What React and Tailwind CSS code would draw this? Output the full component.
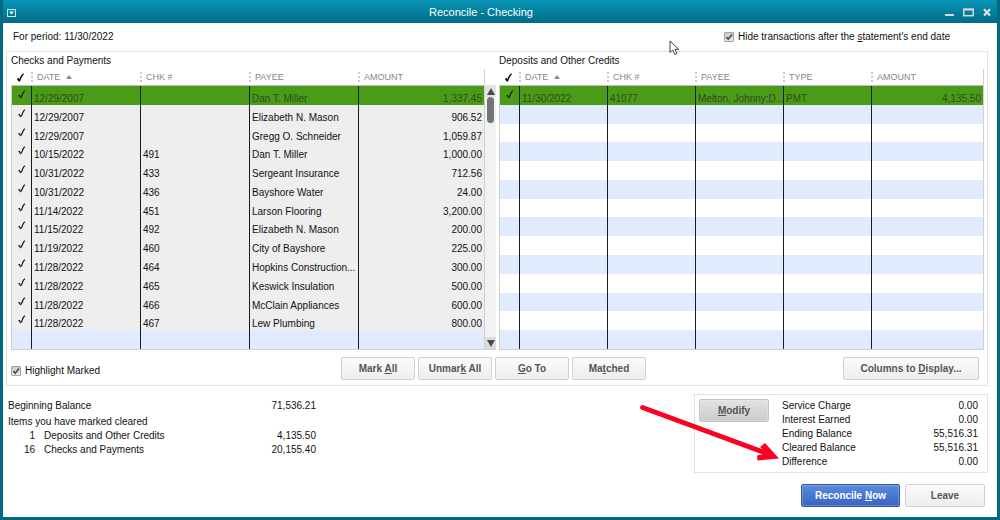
const CHECKS = [
  ["12/29/2007", "", "Dan T. Miller", "1,337.45"],
  ["12/29/2007", "", "Elizabeth N. Mason", "906.52"],
  ["12/29/2007", "", "Gregg O. Schneider", "1,059.87"],
  ["10/15/2022", "491", "Dan T. Miller", "1,000.00"],
  ["10/31/2022", "433", "Sergeant Insurance", "712.56"],
  ["10/31/2022", "436", "Bayshore Water", "24.00"],
  ["11/14/2022", "451", "Larson Flooring", "3,200.00"],
  ["11/15/2022", "492", "Elizabeth N. Mason", "200.00"],
  ["11/19/2022", "460", "City of Bayshore", "225.00"],
  ["11/28/2022", "464", "Hopkins Construction...", "300.00"],
  ["11/28/2022", "465", "Keswick Insulation", "500.00"],
  ["11/28/2022", "466", "McClain Appliances", "600.00"],
  ["11/28/2022", "467", "Lew Plumbing", "800.00"],
];

const DEPOSITS = [["11/30/2022", "41077", "Melton, Johnny:D...", "PMT", "4,135.50"]];

const ROWS = 14;

function HeadTick() {
  return (
    <svg viewBox="0 0 9 10" className="ml-[5px] h-[9px] w-[9px]" fill="#000000" stroke="#000000" strokeWidth="0.3" aria-hidden="true">
      <path d="M0.6 6.2 L2.2 5.8 L3.1 7.3 C4.2 4.4 5.4 2 7.8 0.6 L8.2 1.2 C6.6 3.2 5 5.6 3.9 9.3 L2.3 9.3 Z" />
    </svg>
  );
}

function RowTick() {
  return (
    <svg viewBox="0 0 8 9" className="mt-1 ml-[6px] h-[9px] w-2" fill="none" stroke="#1c1c1c" aria-hidden="true">
      <path d="M0.4 5.6 L1.6 5.6 L2.4 7.8" strokeWidth="1.2" />
      <path d="M2.4 8 C3.2 7.6 3.8 6.4 4.4 4.6 C5 2.8 5.6 1.6 6.9 0.8" strokeWidth="1.3" />
    </svg>
  );
}

function CheckBox({ children }) {
  return (
    <label className="flex items-center gap-1">
      <span className="grid size-[10px] place-items-center">
        <input
          type="checkbox"
          defaultChecked
          className="col-start-1 row-start-1 size-[10px] appearance-none rounded-[1px] border border-[#a3a3a3] bg-linear-to-b from-[#c9c9c9] to-[#ededed]"
        />
        <svg viewBox="0 0 10 10" className="pointer-events-none col-start-1 row-start-1 size-[10px]" fill="none" stroke="#4a4a4a" strokeWidth="1.6">
          <path d="M2.2 5 L4.2 7.2 L8 2.6" />
        </svg>
      </span>
      <span>{children}</span>
    </label>
  );
}

function Button({ className, children }) {
  return (
    <button
      type="button"
      className={`h-[23px] rounded-[2px] border bg-linear-to-b text-[10px] leading-none font-bold shadow-[inset_0_0_0_1px_rgba(255,255,255,0.2)] ${className}`}
    >
      {children}
    </button>
  );
}

const LIGHT = "border-[#cfcfcf] from-[#fcfcfc] to-[#ededed] text-[#555555]";

function Ledger({ heads, widths, rows, marked }) {
  const last = heads.length - 1;
  return (
    <table className="h-[281px] w-full table-fixed border-separate border-spacing-0 border-r border-b border-[#d0d0d0]">
      <colgroup>
        <col className="w-[20px]" />
        {heads.map((h, i) => (
          <col key={h} className={i === last ? "" : widths} />
        ))}
      </colgroup>
      <thead>
        <tr className="h-[17px] text-left text-[9px] leading-none text-[#858585]">
          <th className="border-b border-[#bdbdbd] bg-white p-0">
            <HeadTick />
          </th>
          {heads.map((h) => (
            <th key={h} className="border-b border-[#bdbdbd] bg-white p-0 font-normal">
              <span className="flex h-[10px] items-center border-l-2 border-dotted border-[#cccccc] pl-1">
                {h}
                {h === "DATE" && (
                  <svg viewBox="0 0 6 4" className="ml-[6px] h-1 w-[6px]" fill="#8a8a8a">
                    <path d="M0 4 L3 0 L6 4 Z" />
                  </svg>
                )}
              </span>
            </th>
          ))}
        </tr>
      </thead>
      <tbody>
        {Array.from({ length: ROWS }, (_, r) => {
          const row = rows[r];
          const tone =
            r === 0
              ? "bg-[#4a9c18] text-[#34491f]"
              : row && marked
                ? "bg-[#eeeeee] text-[#111111]"
                : r % 2
                  ? "bg-[#e0ecfe]"
                  : "bg-white";
          return (
            <tr key={r} className={`h-[18px] ${tone}`}>
              <td className="border-l border-[#d0d0d0] p-0 align-top">{row && <RowTick />}</td>
              {heads.map((h, i) => (
                <td
                  key={h}
                  className={`overflow-hidden border-l border-[#1c1c1c] px-[2px] pt-[7px] pb-0 align-top leading-[11px] whitespace-nowrap ${i === last ? "text-right" : ""}`}
                >
                  {row ? row[i] : ""}
                </td>
              ))}
            </tr>
          );
        })}
      </tbody>
    </table>
  );
}

function ScrollBar() {
  return (
    <div className="mt-[16px] flex w-[11px] shrink-0 flex-col border-b border-[#d0d0d0] bg-[#f2f2f2]">
      <button type="button" aria-label="Scroll up" className="grid h-[12px] place-items-center bg-[#e3e3e3]">
        <svg viewBox="0 0 8 7" className="h-[7px] w-2" fill="#4a4a4a">
          <path d="M0 7 L4 0 L8 7 Z" />
        </svg>
      </button>
      <div className="flex-1 px-[2px]">
        <div className="h-[26px] rounded-[4px] bg-[#6f7676]" />
      </div>
      <button type="button" aria-label="Scroll down" className="grid h-[12px] place-items-center bg-[#dcdcdc]">
        <svg viewBox="0 0 8 7" className="h-[7px] w-2" fill="#4a4a4a">
          <path d="M0 0 L4 7 L8 0 Z" />
        </svg>
      </button>
    </div>
  );
}

function TitleBar() {
  return (
    <header className="flex h-[23px] items-center bg-linear-to-b from-[#0795b7] to-[#026c85] pt-[2px] pr-[6px] pl-1">
      <div className="flex flex-1">
        <button type="button" aria-label="Window menu">
          <svg viewBox="0 0 9 8" className="block h-2 w-[9px]" fill="none" stroke="#d3e3e7">
            <rect x="0.5" y="0.5" width="8" height="7" />
            <path d="M2 2.6 H7 L4.5 5.6 Z" fill="#ffffff" stroke="none" />
          </svg>
        </button>
      </div>
      <h1 className="pr-[36px] text-[11px] leading-none text-white">Reconcile - Checking</h1>
      <div className="flex flex-1 items-center justify-end gap-[9px]">
        <button type="button" aria-label="Minimize">
          <svg viewBox="0 0 9 9" className="block size-[9px]">
            <path d="M0 7 H9" stroke="#d6d6d6" strokeWidth="2" />
          </svg>
        </button>
        <button type="button" aria-label="Maximize">
          <svg viewBox="0 0 11 9" className="block h-[9px] w-[11px]" fill="none" stroke="#d6d6d6">
            <rect x="0.8" y="1.3" width="9.4" height="6.4" strokeWidth="1.5" />
            <path d="M0.1 1.5 H10.9" strokeWidth="2" />
          </svg>
        </button>
        <button type="button" aria-label="Close">
          <svg viewBox="0 0 8 9" className="block h-[9px] w-2" stroke="#e2e2e2" strokeWidth="2.2">
            <path d="M1 1.2 L7 7.6 M7 1.2 L1 7.6" />
          </svg>
        </button>
      </div>
    </header>
  );
}

const TOTALS = [
  ["Service Charge", "0.00"],
  ["Interest Earned", "0.00"],
  ["Ending Balance", "55,516.31"],
  ["Cleared Balance", "55,516.31"],
  ["Difference", "0.00"],
];

export default function App() {
  return (
    <div className="relative flex min-h-screen flex-col border-x-[3px] border-b-[3px] border-[#026a80] bg-white font-['Liberation_Sans',Arial,sans-serif] text-[10px] leading-[12px] text-[#111111]">
      <TitleBar />
      <main className="flex flex-1 flex-col pr-[9px] pl-[3px]">
        <div className="flex h-[28px] items-center justify-between pr-[38px] pl-[7px]">
          <p>For period: 11/30/2022</p>
          <CheckBox>
            Hide transactions after the <u>s</u>tatement's end date
          </CheckBox>
        </div>

        <div className="border border-[#e3e3e3] pt-[3px] pr-[3px] pb-[5px] pl-[4px]">
          <div className="flex gap-[3px]">
            <section className="flex-1">
              <h2>Checks and Payments</h2>
              <div className="mt-[2px] flex">
                <Ledger heads={["DATE", "CHK #", "PAYEE", "AMOUNT"]} widths="w-[109px]" rows={CHECKS} marked />
                <ScrollBar />
              </div>
            </section>
            <section className="flex-1">
              <h2>Deposits and Other Credits</h2>
              <div className="mt-[2px]">
                <Ledger heads={["DATE", "CHK #", "PAYEE", "TYPE", "AMOUNT"]} widths="w-[88px]" rows={DEPOSITS} />
              </div>
            </section>
          </div>
          <div className="mt-[7px] flex items-center pr-[5px]">
            <div className="flex-1 pt-1">
              <CheckBox>Highlight Marked</CheckBox>
            </div>
            <div className="flex gap-[3px] pr-[3px]">
              <Button className={`w-[74px] ${LIGHT}`}>Mark <u>A</u>ll</Button>
              <Button className={`w-[74px] ${LIGHT}`}>Unmar<u>k</u> All</Button>
              <Button className={`w-[74px] ${LIGHT}`}><u>G</u>o To</Button>
              <Button className={`w-[74px] ${LIGHT}`}>Ma<u>t</u>ched</Button>
            </div>
            <div className="flex flex-1 justify-end">
              <Button className={`w-[136px] ${LIGHT}`}>Columns to <u>D</u>isplay...</Button>
            </div>
          </div>
        </div>

        <div className="mt-2 flex justify-between">
          <section className="w-[310px] pt-[5px] pl-[2px] leading-[14px]">
            <p className="flex justify-between">
              <span>Beginning Balance</span>
              <span>71,536.21</span>
            </p>
            <p className="mt-[2px]">Items you have marked cleared</p>
            <p className="flex">
              <span className="w-[27px] text-right">1</span>
              <span className="flex-1 pl-[9px]">Deposits and Other Credits</span>
              <span>4,135.50</span>
            </p>
            <p className="flex">
              <span className="w-[27px] text-right">16</span>
              <span className="flex-1 pl-[9px]">Checks and Payments</span>
              <span>20,155.40</span>
            </p>
          </section>

          <section className="relative flex w-[294px] items-start border border-[#e3e3e3] pt-1 pr-[9px] pb-[3px] pl-1">
            <Button className="w-[70px] border-[#c4c4c4] from-[#e2e2e2] to-[#cccccc] text-[#555555]"><u>M</u>odify</Button>
            <dl className="flex-1 pl-[13px] leading-[14px]">
              {TOTALS.map(([name, amount]) => (
                <div key={name} className="flex justify-between">
                  <dt>{name}</dt>
                  <dd>{amount}</dd>
                </div>
              ))}
            </dl>
            <svg viewBox="0 0 142 60" className="pointer-events-none absolute top-[8px] right-[206px] h-[60px] w-[142px]" fill="#fb0222" aria-hidden="true">
              <path d="M3.5 4.5 L128 50.5" stroke="#fb0222" strokeWidth="4.8" strokeLinecap="round" />
              <path d="M140 55.5 L126 40 L121 44 L128 50.5 L118 52.5 L118.5 57.5 Z" />
            </svg>
          </section>
        </div>

        <footer className="mt-[11px] flex justify-end gap-[5px] pr-[3px] pb-2">
          <Button className="w-[99px] border-[#3358a8] from-[#5b8bdc] to-[#3a64c0] text-white">Reconcile <u>N</u>ow</Button>
          <Button className={`w-[80px] ${LIGHT}`}>Leave</Button>
        </footer>
      </main>

      <svg viewBox="0 0 11 16" className="pointer-events-none absolute top-[40px] left-[666px] h-4 w-[11px]" aria-hidden="true">
        <path d="M1 1 L1 12.5 L3.7 10 L5.8 14.6 L7.9 13.6 L6 9.3 L9.8 9.3 Z" fill="#ffffff" stroke="#3f3f4a" />
      </svg>
    </div>
  );
}
